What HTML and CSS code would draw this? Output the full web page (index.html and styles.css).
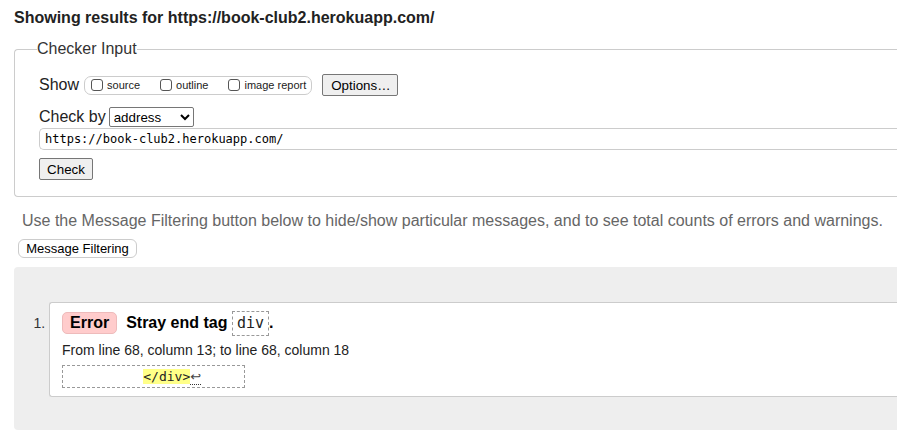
FILE: index.html
```html
<!DOCTYPE html>
<html lang="en">
<head>
<meta charset="utf-8">
<title>Nu Html Checker</title>
<link rel="stylesheet" href="styles.css">
</head>
<body>
<div class="page">
  <h2 class="title">Showing results for https://book-club2.herokuapp.com/</h2>

  <fieldset class="checker">
    <legend class="legend">Checker Input</legend>
    <div class="row row-show">
      <span class="label">Show</span>
      <span class="group">
        <label class="opt"><input type="checkbox" class="cb">source</label>
        <label class="opt"><input type="checkbox" class="cb">outline</label>
        <label class="opt"><input type="checkbox" class="cb">image report</label>
      </span>
      <button class="btn btn-options" type="button">Options…</button>
    </div>
    <div class="row row-by">
      <span class="label">Check by</span>
      <select class="select"><option>address</option></select>
    </div>
    <input class="url" type="text" value="https://book-club2.herokuapp.com/">
    <button class="btn btn-check" type="button">Check</button>
  </fieldset>

  <p class="hint">Use the Message Filtering button below to hide/show particular messages, and to see total counts of errors and warnings.</p>
  <button class="btn-filter" type="button">Message Filtering</button>

  <div class="results">
    <ol class="messages">
      <li class="message">
        <div class="msg-head">
          <span class="badge">Error</span>
          <span class="msg-text">Stray end tag <code class="tag">div</code>.</span>
        </div>
        <p class="location">From line 68, column 13; to line 68, column 18</p>
        <div class="extract"><code class="ex-code">          <b class="hl">&lt;/div&gt;</b><span class="lf">↩</span></code></div>
      </li>
    </ol>
  </div>
</div>
</body>
</html>
```

FILE: styles.css
```css
html {
  background: #fff;
}

body {
  margin: 0;
  font-family: "Liberation Sans", Arial, sans-serif;
  color: #222;
}

.page {
  padding-left: 14px;
}

.title {
  margin: 0;
  padding-top: 9px;
  font-size: 16px;
  line-height: 18px;
  font-weight: bold;
  color: #222;
}

.checker {
  margin: 13px 0 0 0;
  padding: 16px 0 16px 22px;
  border: 1px solid #ccc;
  border-right: none;
  border-radius: 4px 0 0 4px;
  min-width: 0;
}

.legend {
  padding: 0;
  font-size: 16px;
  line-height: 18px;
  color: #333;
}

.row {
  display: flex;
  align-items: center;
  padding-left: 2px;
  font-size: 16px;
  color: #222;
}

.row-show {
  height: 22px;
}

.row-by {
  height: 20px;
  margin-top: 11px;
}

.label {
  line-height: 18px;
}

.group {
  display: flex;
  align-items: center;
  gap: 20px;
  height: 17px;
  margin-left: 5px;
  padding: 0 5px 0 6px;
  border: 1px solid #ccc;
  border-radius: 7px;
  font-size: 11px;
}

.opt {
  display: flex;
  align-items: center;
}

.cb {
  appearance: none;
  -webkit-appearance: none;
  width: 12px;
  height: 12px;
  margin: 0 4px 0 0;
  border: 1px solid #555;
  border-radius: 3px;
  background: #fff;
}

.btn {
  font-family: "Liberation Sans", Arial, sans-serif;
  font-size: 13.33px;
  height: 22px;
  padding: 0 8px;
  background: #efefef;
  color: #000;
  border: 1px solid #767676;
  border-radius: 2px;
}

.btn-options {
  margin-left: 10px;
  width: 76px;
}

.select {
  margin-left: 3px;
  width: 85px;
  height: 20px;
  font-family: "Liberation Sans", Arial, sans-serif;
  font-size: 13.33px;
  border: 1px solid #767676;
  border-radius: 2px;
  background: #fff;
  color: #000;
}

.url {
  display: block;
  box-sizing: border-box;
  margin: 1px 0 0 2px;
  width: calc(100% - 2px);
  height: 22px;
  padding: 0 5px;
  font-family: "DejaVu Sans Mono", monospace;
  font-size: 12px;
  color: #000;
  border: 1px solid #ccc;
  border-right: none;
  border-radius: 5px 0 0 5px;
  background: #fff;
}

.btn-check {
  display: block;
  margin: 8px 0 0 2px;
  width: 54px;
  padding: 0;
}

.hint {
  margin: 15px 0 0 0;
  padding-left: 8px;
  font-size: 16px;
  line-height: 18px;
  color: #666;
  white-space: nowrap;
}

.btn-filter {
  display: block;
  margin: 9px 0 0 4px;
  height: 19px;
  width: 119px;
  padding: 0;
  font-family: "Liberation Sans", Arial, sans-serif;
  font-size: 13px;
  color: #000;
  background: #fff;
  border: 1px solid #ccc;
  border-radius: 6px;
}

.results {
  margin-top: 9px;
  padding: 35px 0 33px 35px;
  background: #eee;
  border-radius: 4px 0 0 4px;
}

.messages {
  margin: 0;
  padding: 0;
  font-size: 14px;
  color: #333;
}

.message {
  padding: 7px 12px 8px 12px;
  background: #fff;
  border: 1px solid #ccc;
  border-right: none;
  border-radius: 3px 0 0 3px;
}

.message::marker {
  font-size: 14px;
}

.msg-head {
  display: flex;
  align-items: center;
  height: 26px;
}

.badge {
  box-sizing: border-box;
  display: inline-block;
  height: 22px;
  line-height: 20px;
  padding: 0 7px;
  background: #fcc;
  border: 1px solid #ebb;
  border-radius: 5px;
  font-size: 16px;
  font-weight: bold;
  color: #000;
}

.msg-text {
  margin-left: 9px;
  font-size: 16px;
  font-weight: bold;
  color: #000;
}

.tag {
  display: inline-block;
  margin-left: 0;
  padding: 0 4px;
  line-height: 23px;
  border: 1px dashed #999;
  font-family: "DejaVu Sans Mono", monospace;
  font-size: 15px;
  font-weight: normal;
  color: #222;
  vertical-align: middle;
}

.location {
  margin: 6px 0 0 0;
  font-size: 14px;
  line-height: 16px;
  color: #222;
}

.extract {
  box-sizing: border-box;
  margin-top: 7px;
  width: 183px;
  height: 23px;
  padding: 2px 2px;
  border: 1px dashed #999;
}

.ex-code {
  white-space: pre;
  font-family: "DejaVu Sans Mono", monospace;
  font-size: 13px;
  line-height: 17px;
  color: #222;
}

.hl {
  font-weight: normal;
  background: #ff8;
}

.lf {
  font-family: "DejaVu Sans", sans-serif;
  font-size: 13px;
  border-bottom: 1px dotted #333;
  color: #444;
}
```
